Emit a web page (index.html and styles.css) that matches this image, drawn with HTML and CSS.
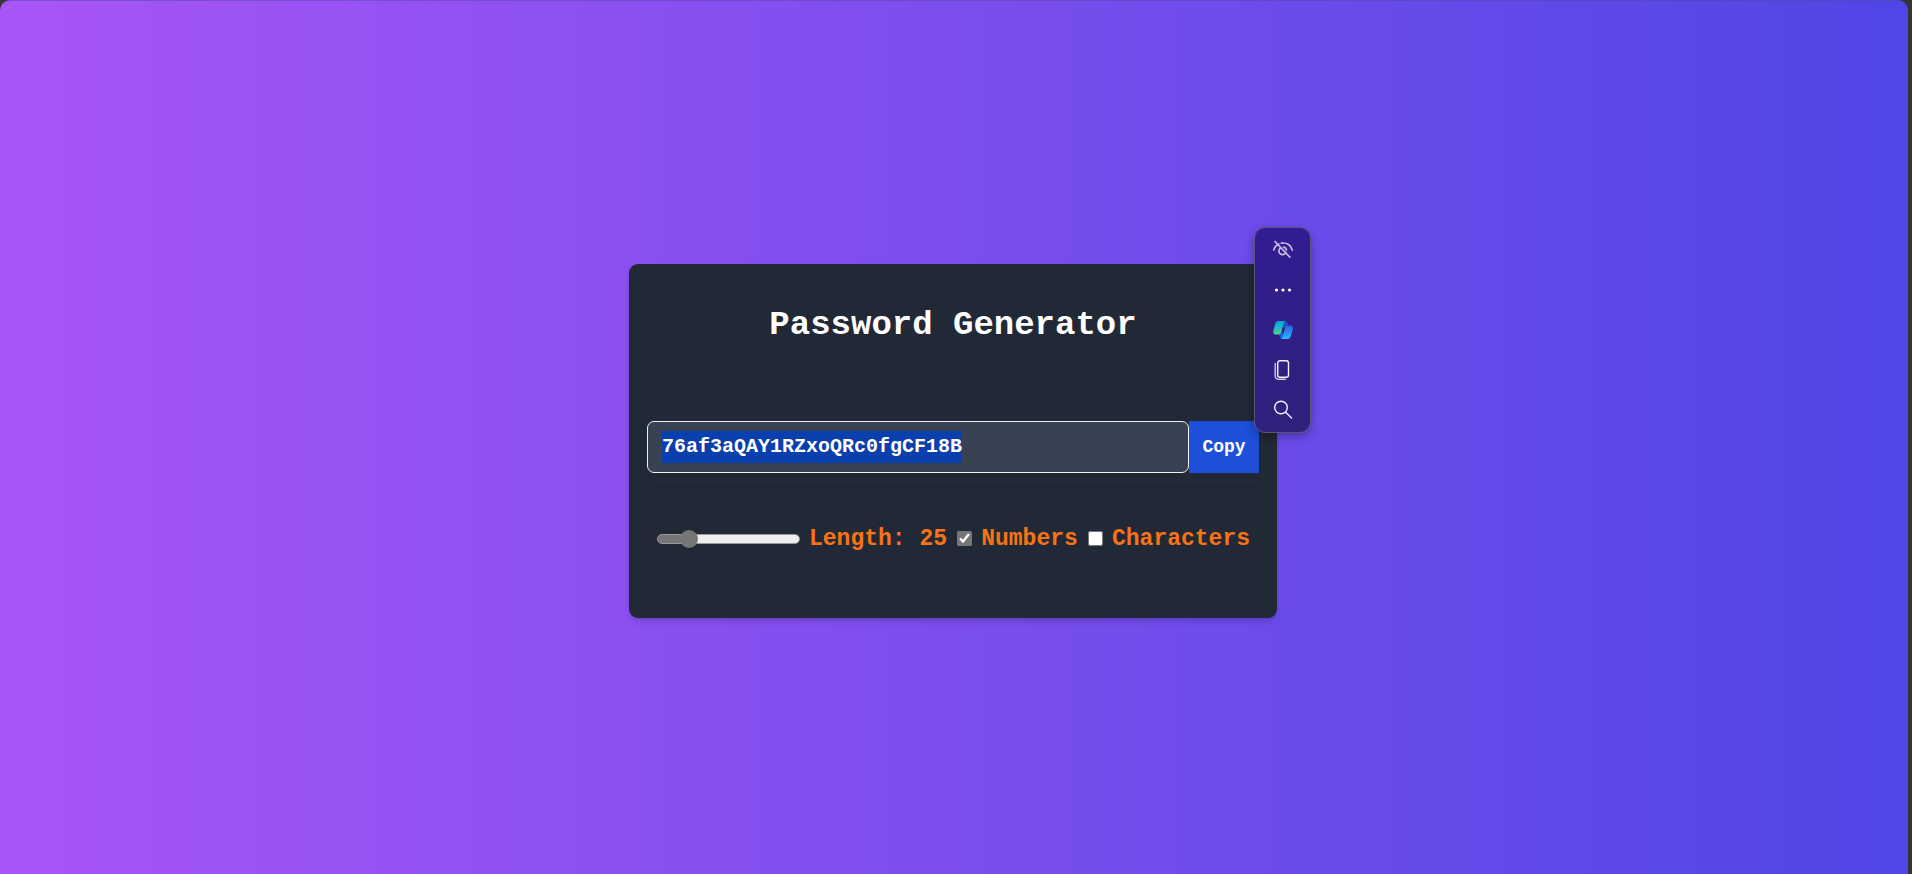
FILE: index.html
```html
<!DOCTYPE html>
<html lang="en">
<head>
<meta charset="utf-8">
<title>Password Generator</title>
<link rel="stylesheet" href="styles.css">
</head>
<body>
<main class="page">
  <section class="card">
    <h1 class="title">Password Generator</h1>
    <div class="field">
      <input class="password" id="password" type="text" value="76af3aQAY1RZxoQRc0fgCF18B" aria-label="Generated password" readonly>
      <button class="copy" type="button">Copy</button>
    </div>
    <div class="options">
      <div class="option">
        <input class="slider" id="length" type="range" min="8" max="105" value="25">
        <label for="length">Length: 25</label>
      </div>
      <div class="option">
        <input class="check" id="numbers" type="checkbox" checked>
        <label for="numbers">Numbers</label>
      </div>
      <div class="option">
        <input class="check" id="characters" type="checkbox">
        <label for="characters">Characters</label>
      </div>
    </div>
    <div class="toolbar" role="toolbar" aria-label="Selection tools">
      <button class="tool" type="button" aria-label="Hide">
        <svg class="icon faded" viewBox="0 0 20 20"><path d="M.8 10C1.500 7.200 3.500 5 5.800 4M8.200 3.200C14 2.200 18.200 5.300 19.200 10M8 7.800A3.600 3.600 0 1 0 12.900 12.300M10.500 7.100A3.500 3.500 0 0 1 13.500 10M2 1.500 16.800 17.200"/></svg>
      </button>
      <button class="tool" type="button" aria-label="More">
        <svg class="icon dots" viewBox="0 0 20 20"><circle cx="3.500" cy="10" r="1.600"/><circle cx="10" cy="10" r="1.600"/><circle cx="16.500" cy="10" r="1.600"/></svg>
      </button>
      <button class="tool" type="button" aria-label="Copilot">
        <svg class="icon copilot" viewBox="0 0 20 20">
          <defs>
            <linearGradient id="left" x1="0" y1="0" x2="0" y2="1"><stop offset="0" stop-color="#0aa5dc"/><stop offset=".5" stop-color="#1fb8c4"/><stop offset="1" stop-color="#55d983"/></linearGradient>
            <linearGradient id="right" x1="0" y1="0" x2="0" y2="1"><stop offset="0" stop-color="#2467df"/><stop offset=".5" stop-color="#2f86f2"/><stop offset="1" stop-color="#25bdf5"/></linearGradient>
          </defs>
          <path fill="#1557c4" d="M9 1h2.500c2.200 0 2.600 1.200 3 2.600l.7 2.400-4 2-4-2z"/>
          <path fill="#1660dd" d="M5 14 9 11l3 8H9.500c-2 0-2.500-1.300-3-3-.3-1-.7-1.700-1.500-2z"/>
          <path fill="url(#left)" d="M5.500 1h6.800C11 1.300 10.800 3 10.300 4.800L8.400 11.500C7.900 13.200 7 14.500 5 14.500H2.700C.3 14.500-.1 12.500.5 10L2.200 4C2.800 2 3.600 1 5.500 1z"/>
          <path fill="url(#right)" d="M14.500 19H7.800c1.500-.3 1.700-2 2.200-3.800l1.900-7C12.400 6.500 13.300 5.500 15.200 5.500h2.100c2.400 0 2.900 2 2.300 4.500L17.900 16c-.6 2-1.500 3-3.400 3z"/>
        </svg>
      </button>
      <button class="tool" type="button" aria-label="Copy selection">
        <svg class="icon" viewBox="0 0 20 20"><rect x="4.700" y=".8" width="10.800" height="16.400" rx="2.200"/><path opacity=".8" d="M2.200 3.500V16a3.500 3.500 0 0 0 3.500 3.300H12.500"/></svg>
      </button>
      <button class="tool" type="button" aria-label="Search">
        <svg class="icon" viewBox="0 0 20 20"><circle cx="8" cy="7.500" r="6.300"/><path d="M12.700 12.200 18.500 18"/></svg>
      </button>
    </div>
  </section>
</main>
<script src="script.js"></script>
</body>
</html>
```
FILE: styles.css
```css
* {
  box-sizing: border-box;
}

body {
  margin: 0;
  background: #353535;
  font-family: "Courier New", "Liberation Mono", monospace;
  font-weight: 700;
}

.page {
  min-height: 100vh;
  margin-right: 4px;
  padding-right: 2px;
  display: flex;
  align-items: center;
  justify-content: center;
  border-top: 1px solid rgba(80, 70, 140, 0.4);
  border-radius: 10px 10px 0 0;
  background: linear-gradient(to right, #a855f7, #4f46e5);
}

.card {
  position: relative;
  width: 648px;
  max-width: 100%;
  margin-top: 6px;
  padding: 39px 18px 63px;
  border-radius: 9px;
  background: #212936;
  box-shadow: 0 4px 7px -1px rgba(0, 0, 0, 0.15), 0 2px 4px -2px rgba(0, 0, 0, 0.15);
}

.title {
  margin: 0;
  color: #fff;
  font-size: 34px;
  line-height: 45px;
  text-align: center;
}

.field {
  display: flex;
  margin-top: 73px;
  padding-bottom: 13px;
  border-radius: 9px;
  box-shadow: 0 1px 2px rgba(0, 0, 0, 0.12);
}

.password {
  flex: 1;
  min-width: 0;
  height: 52px;
  padding: 0 14px;
  border: 1px solid #f0f0f0;
  border-radius: 7px;
  outline: 0;
  background: linear-gradient(#0a3fae, #0a3fae) 14px center / 25ch 32px no-repeat #384252;
  color: #fff;
  font: inherit;
  font-size: 20px;
  line-height: 32px;
}

.password::selection {
  background: rgba(10, 63, 174, 0.996);
  color: #fff;
}

.copy {
  width: 70px;
  height: 52px;
  padding: 0;
  border: 0;
  background: #1d4fd8;
  color: #fff;
  font: inherit;
  font-size: 18px;
}

.options {
  display: flex;
  justify-content: space-between;
  margin-top: 37px;
  padding: 0 9px 0 10px;
  color: #f97316;
  font-size: 23px;
  line-height: 32px;
}

.option {
  display: flex;
  align-items: center;
  gap: 9px;
}

.slider {
  appearance: none;
  width: 143px;
  height: 10px;
  margin: 0;
  border: 1px solid #9a9a9a;
  border-radius: 5px;
  background: linear-gradient(to right, #767676 30px, #efefef 30px);
}

.slider::-webkit-slider-thumb {
  appearance: none;
  width: 18px;
  height: 18px;
  border-radius: 50%;
  background: #767676;
}

.check {
  width: 15px;
  height: 15px;
  margin: 0;
  accent-color: #767676;
}

.toolbar {
  position: absolute;
  top: -37px;
  right: -34px;
  width: 57px;
  padding: 2px 0;
  border: 1px solid #5b5577;
  border-radius: 11px;
  background: linear-gradient(#321c92, #30207c);
  box-shadow: 0 4px 10px rgba(0, 0, 0, 0.3);
}

.tool {
  display: flex;
  align-items: center;
  justify-content: center;
  width: 100%;
  height: 40px;
  padding: 0;
  border: 0;
  background: none;
}

.icon {
  width: 20px;
  height: 20px;
  fill: none;
  stroke: #f4f1fb;
  stroke-width: 1.4;
  stroke-linecap: round;
}

.faded {
  stroke: #c5bce3;
  stroke-width: 1.7;
}

.dots {
  fill: #fff;
  stroke: none;
}

.copilot {
  stroke: none;
}
```
FILE: script.js
```js
const password = document.getElementById("password");
password.focus();
password.select();
```
